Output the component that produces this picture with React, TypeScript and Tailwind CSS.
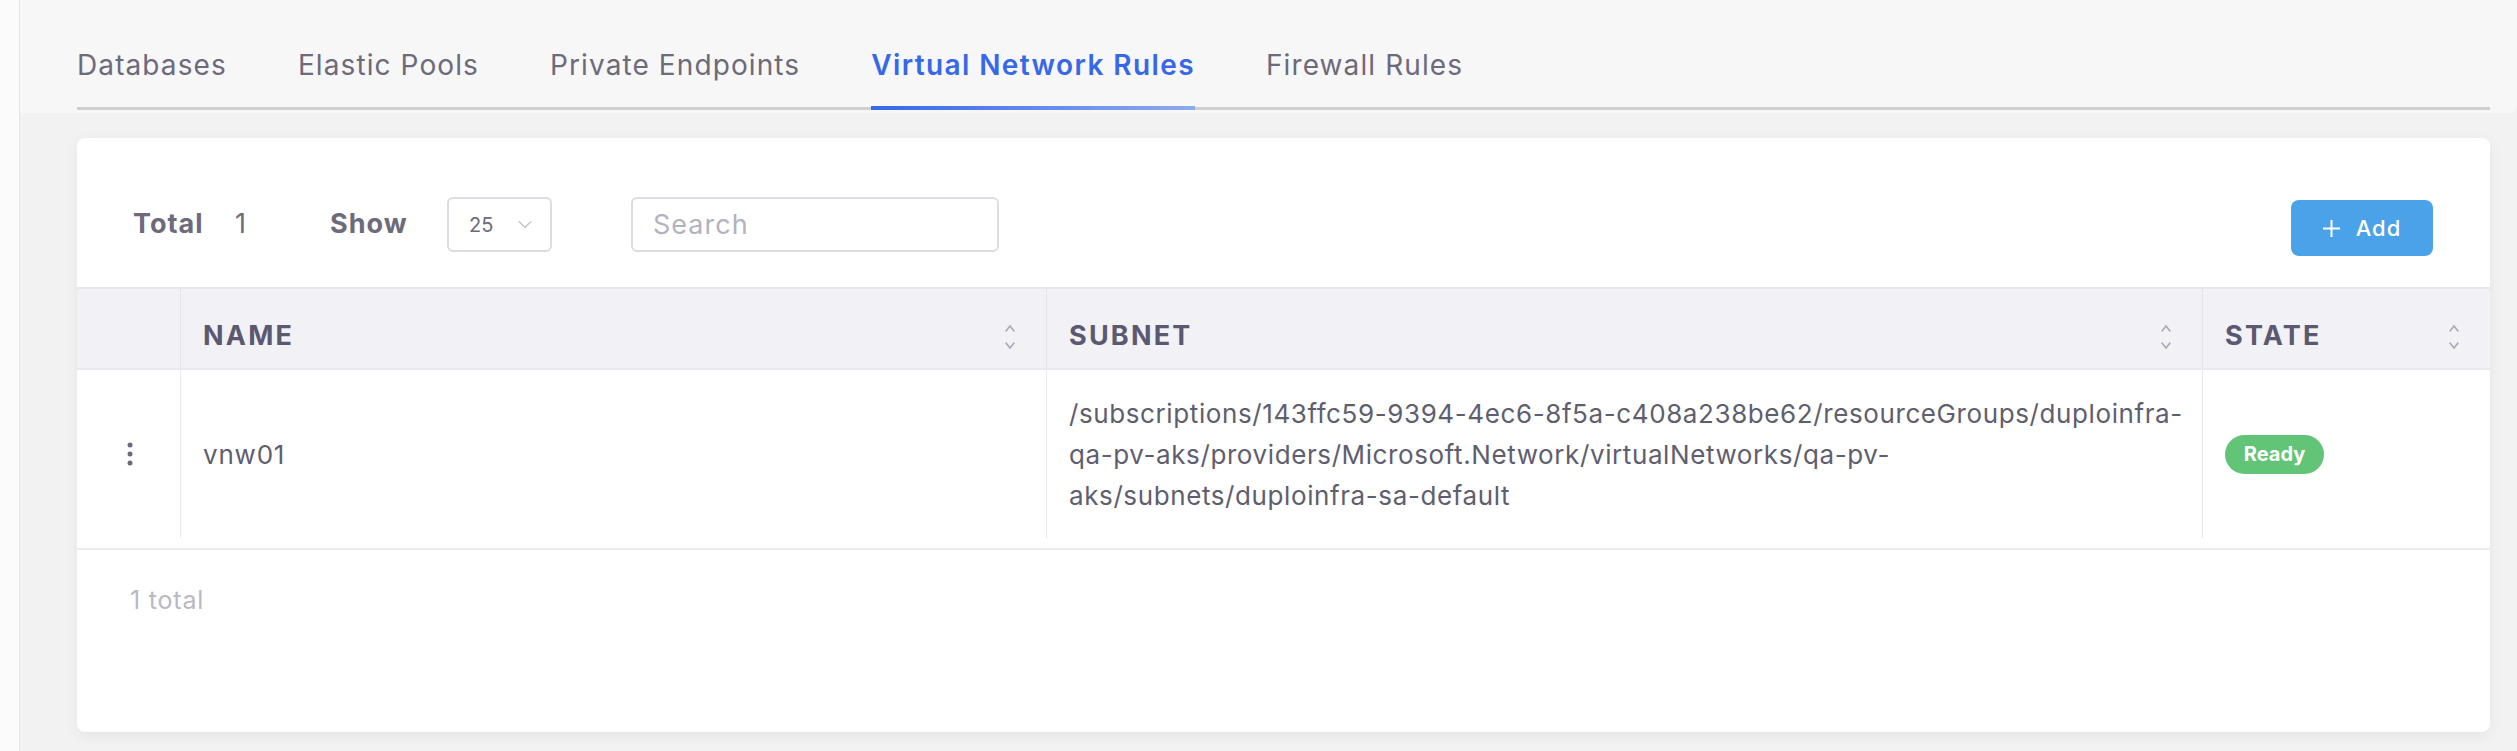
const font = "font-['Inter','Open_Sans','Liberation_Sans',sans-serif]";

const tabs = ['Databases', 'Elastic Pools', 'Private Endpoints', 'Virtual Network Rules', 'Firewall Rules'];

const SortIcon = () => (
  <svg width="12" height="26" viewBox="0 0 12 26" fill="none" stroke="#a9a8b8" strokeWidth="1.6" strokeLinecap="round">
    <path d="M2 7 L6 2 L10 7" />
    <path d="M2 19 L6 24 L10 19" />
  </svg>
);

const HeadCell = ({ label }: { label: string }) => (
  <div className="flex h-[79px] items-center justify-between border-l border-[#e4e4ec] bg-[#f1f1f6] pl-[22px] pr-[30px] pt-[16px]">
    <span className="text-[27px] font-bold uppercase tracking-[2.2px] text-[#5b5971]">{label}</span>
    <SortIcon />
  </div>
);

const Kebab = () => (
  <svg width="6" height="24" viewBox="0 0 6 24" fill="#6c6a7b">
    <circle cx="3" cy="3" r="2.5" />
    <circle cx="3" cy="12" r="2.5" />
    <circle cx="3" cy="21" r="2.5" />
  </svg>
);

export default function App() {
  return (
    <div className={`flex h-[751px] w-[2517px] bg-[#f2f2f2] ${font}`}>
      <div className="w-5 shrink-0 border-r border-[#e3e3e3] bg-[#fbfbfb]" />
      <div className="flex-1">
        {/* tabs */}
        <div className="rounded-br-lg bg-[#f7f7f7] pl-[57px] pr-[27px] pb-[3px]">
          <div className="flex gap-[71px] border-b-[3px] border-[#cfcfcf] pt-[47px]">
            {tabs.map((t) => {
              const active = t === 'Virtual Network Rules';
              return (
                <div
                  key={t}
                  className={`-mb-[3px] border-b-4 border-transparent pb-[23px] text-[28px] leading-[36px] ${
                    active
                      ? 'font-semibold tracking-[1.4px] text-[#3768ea] [border-image:linear-gradient(90deg,#3467ea,#8eaaf0)_1]'
                      : 'tracking-[1.1px] text-[#6c6a7b]'
                  }`}
                >
                  {t}
                </div>
              );
            })}
          </div>
        </div>

        <div className="pl-[57px] pr-[27px]">
          {/* card */}
          <div className="mt-[25px] h-[594px] rounded-lg bg-white shadow-[0_4px_14px_rgba(0,0,0,0.06)]">
            <div className="flex h-[149px] items-start pl-[56px] pr-[57px] pt-[59px]">
              <div className="flex h-[55px] items-center text-[27px] tracking-[1px] text-[#6c6a7b]">
                <span className="w-[102px] font-bold">Total</span>
                <span className="w-[95px]">1</span>
                <span className="w-[117px] font-bold">Show</span>
                <div className="flex h-[55px] w-[105px] items-center justify-between rounded-md border-2 border-[#dcdce4] pl-[20px] pr-[18px]">
                  <span className="text-[20px] tracking-normal text-[#6c6a7b]">25</span>
                  <svg width="14" height="9" viewBox="0 0 14 9" fill="none" stroke="#c3c3cd" strokeWidth="1.5">
                    <path d="M1 1.5 L7 7.5 L13 1.5" />
                  </svg>
                </div>
                <input
                  placeholder="Search"
                  className="ml-[79px] h-[55px] w-[368px] rounded-md border-2 border-[#dcdce4] px-[20px] text-[27px] outline-none placeholder:text-[#b3b2bf]"
                />
              </div>
              <button className="ml-auto mt-[3px] flex h-[56px] w-[142px] items-center justify-center gap-[16px] rounded-lg bg-[#4aa3e8] text-[22px] font-medium tracking-[1px] text-white">
                <svg width="17" height="17" viewBox="0 0 17 17" stroke="white" strokeWidth="2">
                  <path d="M8.5 0 V17 M0 8.5 H17" />
                </svg>
                Add
              </button>
            </div>

            {/* table */}
            <div className="grid grid-cols-[103px_866px_1156px_1fr] border-y-2 border-t-[#e7e7ef] border-b-[#ebebf1] pb-[10px]">
              <div className="h-[79px] bg-[#f1f1f6]" />
              <HeadCell label="Name" />
              <HeadCell label="Subnet" />
              <HeadCell label="State" />

              <div className="flex h-[170px] items-center justify-center border-t-2 border-[#e9e9ef] pl-[2px]">
                <Kebab />
              </div>
              <div className="flex items-center border-l border-t-2 border-[#e9e9ef] pl-[22px] text-[26px] tracking-[0.8px] text-[#5f5e6f]">
                vnw01
              </div>
              <div className="flex flex-col justify-center border-l border-t-2 border-[#e9e9ef] pl-[22px] text-[26px] leading-[41px] tracking-[0.6px] text-[#5f5e6f]">
                <span>/subscriptions/143ffc59-9394-4ec6-8f5a-c408a238be62/resourceGroups/duploinfra-</span>
                <span>qa-pv-aks/providers/Microsoft.Network/virtualNetworks/qa-pv-</span>
                <span>aks/subnets/duploinfra-sa-default</span>
              </div>
              <div className="flex items-center border-l border-t-2 border-[#e9e9ef] pl-[22px]">
                <span className="flex h-[39px] w-[99px] items-center justify-center rounded-full bg-[#62c477] text-[20px] font-bold text-white">
                  Ready
                </span>
              </div>
            </div>

            <div className="pl-[53px] pt-[36px] text-[25px] leading-[28px] tracking-[0.8px] text-[#b9b8c4]">1 total</div>
          </div>
        </div>
      </div>
    </div>
  );
}
